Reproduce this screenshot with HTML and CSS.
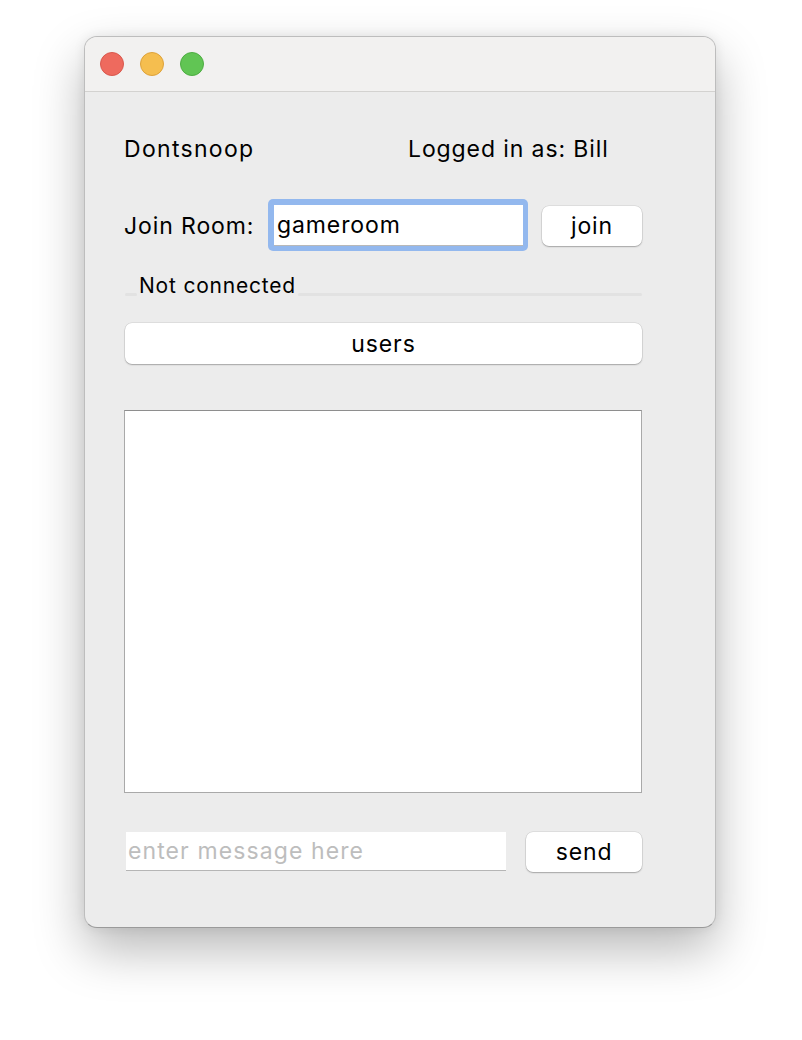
FILE: index.html
```html
<!DOCTYPE html>
<html>
<head>
<meta charset="utf-8">
<link rel="stylesheet" href="styles.css">
</head>
<body>
<div class="window">
  <div class="titlebar">
    <span class="light red"></span>
    <span class="light yellow"></span>
    <span class="light green"></span>
  </div>
  <div class="content">
    <div class="row head">
      <span class="app">Dontsnoop</span>
      <span class="login">Logged in as: Bill</span>
    </div>
    <div class="row join">
      <span class="label">Join Room:</span>
      <div class="ring"><div class="field">gameroom</div></div>
      <button class="btn join-btn">join</button>
    </div>
    <div class="group">
      <span class="seg first"></span>
      <span class="group-title">Not connected</span>
      <span class="seg rest"></span>
    </div>
    <button class="btn users">users</button>
    <div class="log"></div>
    <div class="row send-row">
      <div class="msg">enter message here</div>
      <button class="btn send">send</button>
    </div>
  </div>
</div>
</body>
</html>
```
FILE: styles.css
```css
html, body {
  margin: 0;
  padding: 0;
  background: #ffffff;
}
body {
  padding: 36px 0 0 84px;
  min-height: 1040px;
  box-sizing: border-box;
  font-family: Inter, "Noto Sans", sans-serif;
  color: #000;
}
.window {
  width: 632px;
  height: 892px;
  box-sizing: border-box;
  border: 1px solid #bdbdbd;
  border-bottom-color: #9a9a9a;
  border-radius: 13px;
  background: #ececec;
  overflow: hidden;
  box-shadow: 0 22px 50px rgba(0,0,0,0.28), 0 0 12px rgba(0,0,0,0.08);
  display: flex;
  flex-direction: column;
}
.titlebar {
  height: 55px;
  flex: none;
  background: #f2f1f0;
  border-bottom: 1px solid #d3d2d0;
  display: flex;
  align-items: center;
  gap: 16px;
  padding-left: 15px;
  box-sizing: border-box;
}
.light {
  width: 24px;
  height: 24px;
  border-radius: 50%;
  box-sizing: border-box;
}
.red { background: #ee6a5e; border: 1px solid #d9584d; }
.yellow { background: #f5be4f; border: 1px solid #dea23a; }
.green { background: #61c554; border: 1px solid #4ead42; }
.content {
  padding: 0 73px 0 39px;
  display: flex;
  flex-direction: column;
  font-size: 23px;
  letter-spacing: 0.9px;
}
.row {
  display: flex;
  align-items: center;
}
.head {
  margin-top: 41px;
  height: 32px;
}
.app { width: 284px; letter-spacing: 1.3px; }
.join {
  margin-top: 34px;
  height: 52px;
}
.label { width: 144px; position: relative; top: 1px; }
.ring {
  width: 260px;
  height: 52px;
  box-sizing: border-box;
  border-radius: 5px;
  background: #93b8ee;
  padding: 6px 5px 5px 6px;
}
.field {
  height: 100%;
  background: #fff;
  border-bottom: 1px solid #b8b8b8;
  box-sizing: border-box;
  display: flex;
  align-items: center;
  padding-left: 3px;
}
.btn {
  font-family: inherit;
  font-size: 23px;
  letter-spacing: 0.9px;
  color: #000;
  background: #fff;
  border: none;
  border-radius: 7px;
  box-shadow: 0 0 0 0.5px rgba(0,0,0,0.12), 0 1px 1.5px rgba(0,0,0,0.25);
  padding: 0;
  height: 40px;
}
.join-btn {
  width: 100px;
  margin-left: 14px;
  align-self: flex-start;
  margin-top: 7px;
}
.group {
  margin-top: 21px;
  display: flex;
  align-items: flex-end;
  height: 24px;
  margin-left: 1px;
}
.seg {
  height: 3px;
  background: #e2e2e2;
  border-radius: 2px;
}
.seg.first { width: 12px; }
.seg.rest { flex: 1; }
.group-title {
  font-size: 21px;
  letter-spacing: 0.8px;
  line-height: 24px;
  padding: 0 2px;
  position: relative;
  top: 2px;
}
.users {
  margin-top: 27px;
  margin-left: 1px;
  height: 41px;
}
.log {
  margin-top: 46px;
  height: 383px;
  background: #fff;
  border: 1px solid #a9a9a9;
  border-top-color: #8e8e8e;
  box-sizing: border-box;
}
.send-row {
  margin-top: 39px;
  align-items: flex-start;
}
.msg {
  width: 381px;
  height: 39px;
  margin-left: 2px;
  background: #fff;
  border-bottom: 1px solid #b5b5b5;
  box-sizing: border-box;
  color: #bdbdbd;
  display: flex;
  align-items: center;
  padding-left: 2px;
  letter-spacing: 1.1px;
}
.send {
  width: 116px;
  margin-left: 20px;
}
```
